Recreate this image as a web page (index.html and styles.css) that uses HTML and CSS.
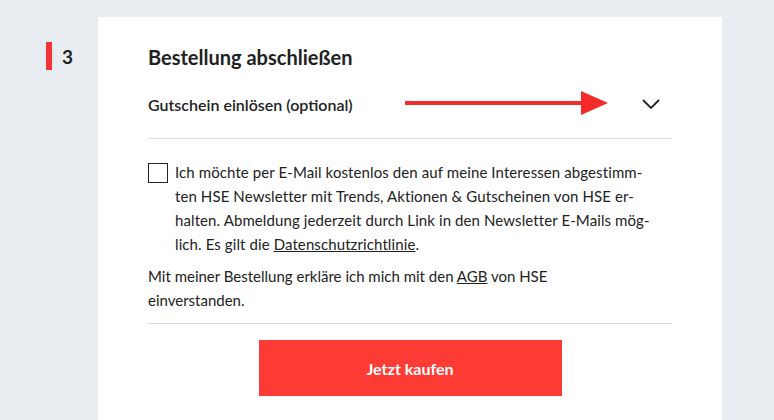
FILE: index.html
```html
<!DOCTYPE html>
<html lang="de">
<head>
  <meta charset="UTF-8" />
  <meta name="viewport" content="width=device-width, initial-scale=1.0"/>
  <title>HSE - Bestellung abschließen</title>
  <link rel="stylesheet" href="styles.css">
</head>
<body>
  <div class="checkout">
    <div class="step">
      <span class="step-bar"></span>
      <span class="step-num">3</span>
    </div>
    <section class="card">
      <h2>Bestellung abschließen</h2>

      <div class="voucher">
        <span>Gutschein einlösen (optional)</span>
        <svg class="chevron" width="18" height="10" viewBox="0 0 18 10">
          <path d="M1 1 L9 9 L17 1" fill="none" stroke="#222" stroke-width="1.8"/>
        </svg>
        <svg class="hint-arrow" width="204" height="26" viewBox="0 0 204 26">
          <line x1="0" y1="13" x2="180" y2="13" stroke="#f42b2b" stroke-width="4"/>
          <polygon points="176,1 203,13 176,25" fill="#f42b2b"/>
        </svg>
      </div>

      <label class="newsletter">
        <span class="box"></span>
        <span class="newsletter-text">Ich möchte per E-Mail kostenlos den auf meine Interessen abgestimm-<br>ten HSE Newsletter mit Trends, Aktionen &amp; Gutscheinen von HSE er-<br>halten. Abmeldung jederzeit durch Link in den Newsletter E-Mails mög-<br>lich. Es gilt die <a href="#">Datenschutzrichtlinie</a>.</span>
      </label>

      <p class="terms">Mit meiner Bestellung erkläre ich mich mit den <a href="#">AGB</a> von HSE einverstanden.</p>

      <div class="buy">
        <button>Jetzt kaufen</button>
      </div>
    </section>
  </div>
</body>
</html>
```

FILE: styles.css
```css
body {
  font-family: Lato, 'Open Sans', sans-serif;
  background-color: #e9edf1;
  color: #222;
  margin: 0;
}
.checkout {
  display: flex;
  padding-top: 17px;
}
.step {
  width: 98px;
  display: flex;
  align-items: center;
  gap: 10px;
  padding-left: 46px;
  box-sizing: border-box;
  height: 28px;
  margin-top: 25px;
}
.step-bar {
  display: block;
  width: 6px;
  height: 28px;
  background-color: #f4333b;
}
.step-num {
  font-size: 19px;
  font-weight: bold;
}
.card {
  width: 624px;
  background-color: white;
  padding: 27px 50px 30px;
  box-sizing: border-box;
}
h2 {
  margin: 0;
  font-size: 20px;
  line-height: 26px;
  font-weight: bold;
}
.voucher {
  position: relative;
  display: flex;
  align-items: center;
  justify-content: space-between;
  height: 68px;
  padding-right: 12px;
  border-bottom: 1px solid #dcdcdc;
  font-size: 16px;
  font-weight: 600;
  margin-bottom: 21px;
}
.hint-arrow {
  position: absolute;
  left: 257px;
  top: 20px;
}
.newsletter {
  display: flex;
  gap: 7px;
  font-size: 15px;
  line-height: 24px;
  letter-spacing: 0.1px;
}
.box {
  flex: none;
  width: 18px;
  height: 18px;
  border: 1px solid #222;
  margin-top: 3px;
}
a {
  color: #222;
}
.terms {
  max-width: 420px;
  margin: 8px 0 0;
  font-size: 15px;
  line-height: 24px;
  padding-bottom: 11px;
}
.buy {
  border-top: 1px solid #dcdcdc;
  padding-top: 16px;
  text-align: center;
}
button {
  width: 303px;
  height: 56px;
  border: none;
  background-color: #fe3b35;
  color: white;
  font-family: inherit;
  font-size: 16px;
  font-weight: bold;
}
```
